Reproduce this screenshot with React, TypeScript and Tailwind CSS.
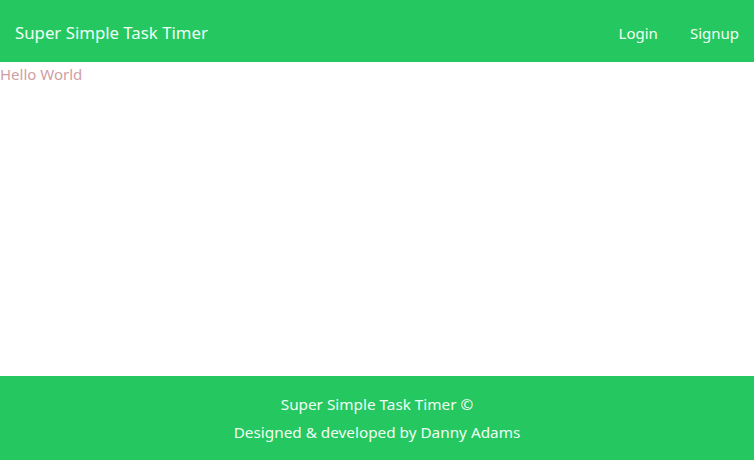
const App = () => {
  return (
    <div className="flex flex-col min-h-screen bg-white font-['Noto_Sans',sans-serif]">
      {/* Navbar */}
      <nav className="h-[62px] bg-[#25c760] flex items-center justify-between pt-[4px] px-[15px]">
        <span className="text-[16.8px] text-[#f0fff4]">Super Simple Task Timer</span>
        <div className="flex items-center gap-[32px] text-[15px] text-[#f0fff4]">
          <a href="#">Login</a>
          <a href="#">Signup</a>
        </div>
      </nav>

      <main className="flex-1">
        <p className="text-[15px] text-[#cf9ea5] leading-[24px]">Hello World</p>
      </main>

      {/* Footer */}
      <footer className="h-[84px] bg-[#25c760] flex flex-col items-center justify-center text-[15.3px] text-[#f0fff4] leading-[28px]">
        <p>Super Simple Task Timer ©</p>
        <p>Designed &amp; developed by Danny Adams</p>
      </footer>
    </div>
  );
};

export default App;
